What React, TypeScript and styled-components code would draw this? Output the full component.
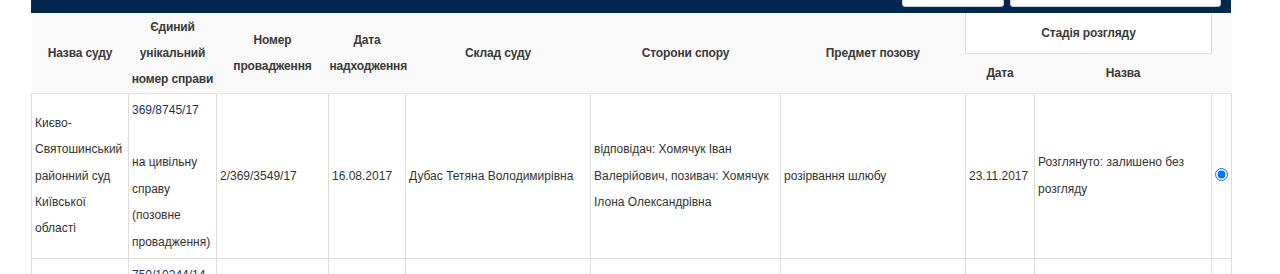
import React from "react";
import styled, { createGlobalStyle } from "styled-components";

const Global = createGlobalStyle`
  html, body { margin: 0; padding: 0; background: #fff; }
  body { font-family: "Liberation Sans", Arial, sans-serif; color: #333; }
`;

const Page = styled.div`
  padding-left: 31px;
  width: 1200px;
`;

const TopBar = styled.div`
  height: 13px;
  background: #03284f;
  display: flex;
  justify-content: flex-end;
  align-items: flex-end;
  gap: 6px;
  padding-right: 10px;
  overflow: hidden;
`;

const BarButton = styled.button<{ $w: number }>`
  width: ${(p) => p.$w}px;
  height: 24px;
  margin-bottom: 6px;
  background: #fff;
  border: 1px solid #c9ccd1;
  border-radius: 0 0 3px 3px;
  padding: 0;
  flex: none;
`;

const Table = styled.table`
  width: 1200px;
  border-collapse: collapse;
  table-layout: fixed;
  font-size: 12px;
`;

const Head = styled.thead`
  background: #f9f9f9;
`;

const HeadRow = styled.tr<{ $h: number }>`
  height: ${(p) => p.$h}px;
`;

const Th = styled.th<{ $stage?: boolean }>`
  font-weight: bold;
  color: #3a3a3a;
  text-align: center;
  vertical-align: middle;
  padding: 0 1px;
  line-height: 26px;
  letter-spacing: -0.15px;
  border: none;
  border-bottom: 1px solid #e6e6e6;
  ${(p) =>
    p.$stage
      ? `background: #fff; border-left: 1px solid #ddd; border-right: 1px solid #ddd; border-bottom: 1px solid #ddd;`
      : ""}
`;

const Td = styled.td<{ $top?: boolean }>`
  border: 1px solid #ddd;
  padding: 3px 3px;
  line-height: 26.4px;
  vertical-align: ${(p) => (p.$top ? "top" : "middle")};
  text-align: left;
  color: #333;
  word-wrap: break-word;
`;

const RadioCell = styled.td`
  border: 1px solid #ddd;
  padding: 0;
  text-align: center;
  vertical-align: middle;
`;

const Radio = styled.input`
  margin: 0 0 2px 0;
  width: 13px;
  height: 13px;
  vertical-align: middle;
`;

const CaseLink = styled.a`
  color: #16365f;
  text-decoration: none;
`;

type Row = {
  court: string;
  caseNo: string;
  caseType: string;
  proc: string;
  date: string;
  judge: string;
  parties: string;
  subject: string;
  stageDate: string;
  stageName: string;
  checked: boolean;
};

const rows: Row[] = [
  {
    court: "Києво-Святошинський районний суд Київської області",
    caseNo: "369/8745/17",
    caseType: "на цивільну справу (позовне провадження)",
    proc: "2/369/3549/17",
    date: "16.08.2017",
    judge: "Дубас Тетяна Володимирівна",
    parties:
      "відповідач: Хомячук Іван Валерійович, позивач: Хомячук Ілона Олександрівна",
    subject: "розірвання шлюбу",
    stageDate: "23.11.2017",
    stageName: "Розглянуто: залишено без розгляду",
    checked: true,
  },
  {
    court: "Києво-Святошинський районний суд Київської області",
    caseNo: "750/10244/14",
    caseType: "на цивільну справу (позовне провадження)",
    proc: "2/750/3711/14",
    date: "04.09.2014",
    judge: "Хомяк Наталія Вікторівна",
    parties: "відповідач: Хомячук Іван Валерійович",
    subject: "стягнення аліментів",
    stageDate: "12.11.2014",
    stageName: "Розглянуто",
    checked: false,
  },
];

const widths = [97, 88, 112, 77, 185, 190, 185, 69, 177, 20];

export default function App() {
  return (
    <>
      <Global />
      <Page>
        <TopBar>
          <BarButton $w={102} aria-label="button" />
          <BarButton $w={211} aria-label="button" />
        </TopBar>
        <Table>
          <colgroup>
            {widths.map((w, i) => (
              <col key={i} style={{ width: w }} />
            ))}
          </colgroup>
          <Head>
            <HeadRow $h={40}>
              <Th rowSpan={2}>Назва суду</Th>
              <Th rowSpan={2}>Єдиний унікальний номер справи</Th>
              <Th rowSpan={2}>Номер провадження</Th>
              <Th rowSpan={2}>Дата надходження</Th>
              <Th rowSpan={2}>Склад суду</Th>
              <Th rowSpan={2}>Сторони спору</Th>
              <Th rowSpan={2}>Предмет позову</Th>
              <Th colSpan={2} $stage>
                Стадія розгляду
              </Th>
              <Th rowSpan={2} />
            </HeadRow>
            <HeadRow $h={40}>
              <Th>Дата</Th>
              <Th>Назва</Th>
            </HeadRow>
          </Head>
          <tbody>
            {rows.map((r, i) => (
              <tr key={i}>
                <Td>{r.court}</Td>
                <Td $top>
                  <CaseLink href="#">{r.caseNo}</CaseLink>
                  <br />
                  <br />
                  {r.caseType}
                </Td>
                <Td>{r.proc}</Td>
                <Td>{r.date}</Td>
                <Td>{r.judge}</Td>
                <Td>{r.parties}</Td>
                <Td>{r.subject}</Td>
                <Td>{r.stageDate}</Td>
                <Td>{r.stageName}</Td>
                <RadioCell>
                  <Radio type="radio" name="case" defaultChecked={r.checked} />
                </RadioCell>
              </tr>
            ))}
          </tbody>
        </Table>
      </Page>
    </>
  );
}
